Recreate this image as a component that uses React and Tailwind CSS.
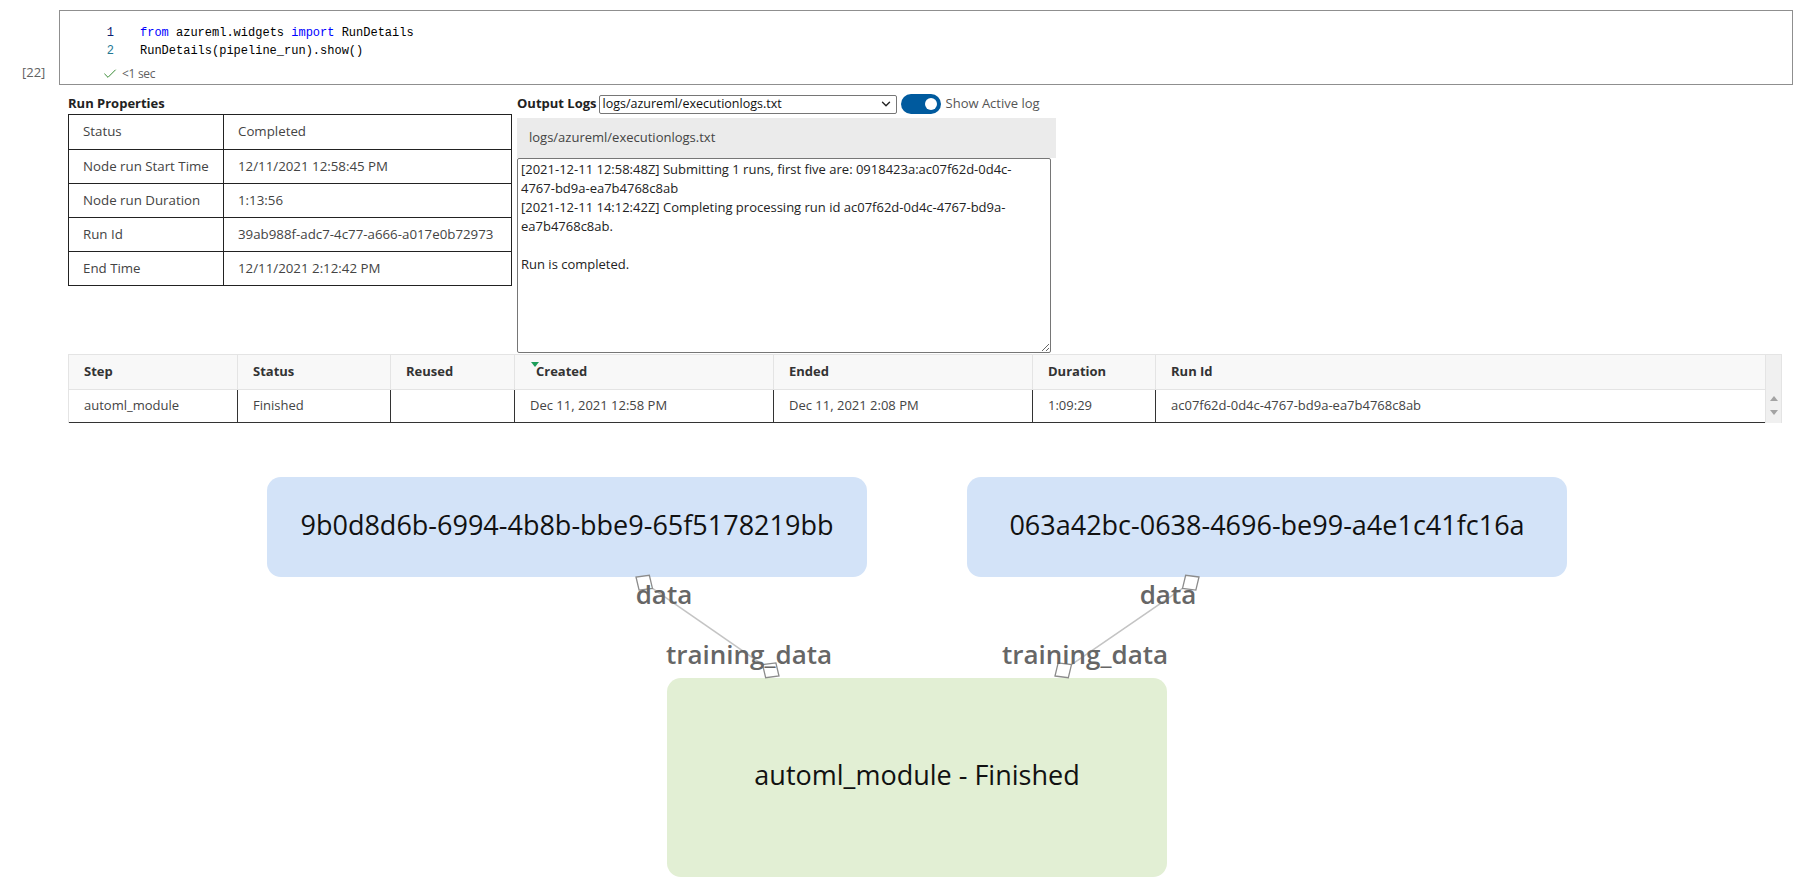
import React from 'react';
import { Check, ChevronDown } from 'lucide-react';

const runProps = [
  ['Status', 'Completed'],
  ['Node run Start Time', '12/11/2021 12:58:45 PM'],
  ['Node run Duration', '1:13:56'],
  ['Run Id', '39ab988f-adc7-4c77-a666-a017e0b72973'],
  ['End Time', '12/11/2021 2:12:42 PM'],
];

const stepCols = [
  { label: 'Step', value: 'automl_module', w: 'w-[169px]' },
  { label: 'Status', value: 'Finished', w: 'w-[153px]' },
  { label: 'Reused', value: '', w: 'w-[124px]' },
  { label: 'Created', value: 'Dec 11, 2021 12:58 PM', w: 'w-[259px]', sorted: true },
  { label: 'Ended', value: 'Dec 11, 2021 2:08 PM', w: 'w-[259px]' },
  { label: 'Duration', value: '1:09:29', w: 'w-[123px]' },
  { label: 'Run Id', value: 'ac07f62d-0d4c-4767-bd9a-ea7b4768c8ab', w: 'w-[609px]', last: true },
];

const logText =
  '[2021-12-11 12:58:48Z] Submitting 1 runs, first five are: 0918423a:ac07f62d-0d4c-\n' +
  '4767-bd9a-ea7b4768c8ab\n' +
  '[2021-12-11 14:12:42Z] Completing processing run id ac07f62d-0d4c-4767-bd9a-\n' +
  'ea7b4768c8ab.\n' +
  '\n' +
  'Run is completed.';

// graph edges, coordinates inside the graph canvas
const edges = [
  { x1: 636, y1: 154, x2: 779, y2: 253 },
  { x1: 1199, y1: 154, x2: 1055, y2: 253 },
];

const diamond = (x, y, ux, uy, len, hw) => {
  const cx = x + (ux * len) / 2;
  const cy = y + (uy * len) / 2;
  const px = -uy;
  const py = ux;
  return [
    [x, y],
    [cx + px * hw, cy + py * hw],
    [x + ux * len, y + uy * len],
    [cx - px * hw, cy - py * hw],
  ]
    .map((p) => p.join(','))
    .join(' ');
};

const Edge = ({ x1, y1, x2, y2 }) => {
  const dx = x2 - x1;
  const dy = y2 - y1;
  const d = Math.sqrt(dx * dx + dy * dy);
  const ux = dx / d;
  const uy = dy / d;
  const len = 20;
  return (
    <g>
      <line
        x1={x1 + ux * len}
        y1={y1 + uy * len}
        x2={x2 - ux * len}
        y2={y2 - uy * len}
        stroke="#c4c4c4"
        strokeWidth="1.6"
      />
      <polygon points={diamond(x1, y1, ux, uy, len, 9)} fill="#fff" stroke="#8c8c8c" strokeWidth="1.3" />
      <polygon points={diamond(x2, y2, -ux, -uy, len, 9)} fill="#fff" stroke="#8c8c8c" strokeWidth="1.3" />
    </g>
  );
};

const Toggle = () => (
  <div className="ml-[4px] w-[40px] h-[20px] rounded-full bg-[#005a9e] flex items-center justify-end pr-[4px]">
    <div className="w-[12px] h-[12px] rounded-full bg-white" />
  </div>
);

const App = () => {
  return (
    <div className="w-[1807px] min-h-[891px] bg-white text-[#333] font-['Open_Sans',sans-serif]">
      {/* notebook cell */}
      <div className="flex pt-[10px] pr-[14px]">
        <div className="w-[59px] shrink-0 flex items-end pl-[22px] pb-[3px] text-[13px] text-[#616161]">[22]</div>
        <div className="flex-1 h-[75px] border border-[#8f8f8f] pt-[13px]">
          <div className="font-['Liberation_Mono',monospace] text-[12px] leading-[18px]">
            <div className="flex">
              <span className="w-[54px] text-right text-[#0b216f]">1</span>
              <span className="ml-[26px] text-[#000]">
                <span className="text-[#0000ff]">from</span> azureml.widgets <span className="text-[#0000ff]">import</span> RunDetails
              </span>
            </div>
            <div className="flex">
              <span className="w-[54px] text-right text-[#237893]">2</span>
              <span className="ml-[26px] text-[#000]">RunDetails(pipeline_run).show()</span>
            </div>
          </div>
          <div className="mt-[6px] h-[16px] flex items-center pl-[42px] text-[12px] text-[#616161]">
            <Check size={16} strokeWidth={1.5} className="text-[#388a34]" />
            <span className="ml-[4px] tracking-[-0.3px]">&lt;1 sec</span>
          </div>
        </div>
      </div>

      {/* run details widget */}
      <div className="pl-[68px] pt-[9px] flex">
        <div className="w-[444px]">
          <div className="h-[20px] flex items-center text-[13px] font-bold text-[#222]">Run Properties</div>
          <div className="border border-[#222] text-[13.3px] text-[#444]">
            {runProps.map(([k, v], i) => (
              <div key={k} className={`flex h-[34px] ${i > 0 ? 'border-t border-[#222]' : ''}`}>
                <div className="w-[155px] border-r border-[#222] pl-[14px] flex items-center">{k}</div>
                <div className="flex-1 pl-[14px] flex items-center">{v}</div>
              </div>
            ))}
          </div>
        </div>

        <div className="ml-[5px]">
          <div className="h-[20px] flex items-center">
            <span className="text-[13px] font-bold text-[#222]">Output Logs</span>
            <div className="ml-[2px] w-[298px] h-[19px] border border-[#767676] rounded-[2px] flex items-center justify-between pl-[3px] pr-[3px] text-[12.5px] text-[#111]">
              <span>logs/azureml/executionlogs.txt</span>
              <ChevronDown size={14} strokeWidth={2.4} className="text-[#222]" />
            </div>
            <Toggle />
            <span className="ml-[5px] text-[13px] text-[#555]">Show Active log</span>
          </div>
          <div className="mt-[4px] w-[539px] h-[40px] bg-[#ebebeb] pl-[12px] flex items-center text-[13px] text-[#444]">
            logs/azureml/executionlogs.txt
          </div>
          <textarea
            readOnly
            defaultValue={logText}
            className="block w-[534px] h-[195px] border border-[#767676] rounded-[2px] px-[3px] py-[1px] text-[13px] leading-[19px] text-[#222] resize overflow-hidden"
          />
        </div>
      </div>

      {/* steps table */}
      <div className="ml-[68px] mt-[1px] w-[1714px] flex border border-b-0 border-[#e4e4e4] text-[13px]">
        <div className="flex flex-col">
          <div className="flex h-[34px] bg-[#f8f8f8]">
            {stepCols.map((c) => (
              <div
                key={c.label}
                className={`${c.w} relative flex items-center font-bold text-[#333] ${c.last ? '' : 'border-r border-[#e4e4e4]'} ${c.sorted ? 'pl-[21px]' : 'pl-[15px]'}`}
              >
                {c.sorted && (
                  <div className="absolute left-[16px] top-[7px] w-0 h-0 border-l-[4px] border-r-[4px] border-t-[5px] border-l-transparent border-r-transparent border-t-[#1e9e5a]" />
                )}
                {c.label}
              </div>
            ))}
          </div>
          <div className="flex h-[34px] border-t border-[#e4e4e4] border-b border-b-[#333]">
            {stepCols.map((c) => (
              <div
                key={c.label}
                className={`${c.w} flex items-center pl-[15px] text-[#444] ${c.last ? '' : 'border-r border-[#333]'}`}
              >
                {c.value}
              </div>
            ))}
          </div>
        </div>
        <div className="w-[18px] bg-[#f0f0f0] border-l border-[#e4e4e4] flex flex-col">
          <div className="h-[35px]" />
          <div className="flex flex-col items-center pt-[6px] gap-[9px]">
            <div className="w-0 h-0 border-l-[4px] border-r-[4px] border-b-[5px] border-l-transparent border-r-transparent border-b-[#a3a3a3]" />
            <div className="w-0 h-0 border-l-[4px] border-r-[4px] border-t-[5px] border-l-transparent border-r-transparent border-t-[#a3a3a3]" />
          </div>
        </div>
      </div>

      {/* pipeline graph */}
      <div className="relative h-[469px]">
        <div className="absolute left-[267px] top-[54px] w-[600px] h-[100px] rounded-[14px] bg-[#d3e3f8] flex items-center justify-center pb-[4px] text-[27px] text-[#111]">
          9b0d8d6b-6994-4b8b-bbe9-65f5178219bb
        </div>
        <div className="absolute left-[967px] top-[54px] w-[600px] h-[100px] rounded-[14px] bg-[#d3e3f8] flex items-center justify-center pb-[4px] text-[27px] text-[#111]">
          063a42bc-0638-4696-be99-a4e1c41fc16a
        </div>
        <div className="absolute left-[667px] top-[255px] w-[500px] h-[199px] rounded-[14px] bg-[#e2efd4] flex items-center justify-center pb-[4px] text-[27px] text-[#111]">
          automl_module - Finished
        </div>

        <svg className="absolute inset-0" width="1807" height="469">
          {edges.map((e, i) => (
            <Edge key={i} {...e} />
          ))}
        </svg>

        <div className="absolute left-[664px] top-[158px] -translate-x-1/2 leading-none text-[26px] font-semibold text-[#666]">data</div>
        <div className="absolute left-[749px] top-[218px] -translate-x-1/2 leading-none text-[26px] font-semibold text-[#666] whitespace-nowrap">training_data</div>
        <div className="absolute left-[1168px] top-[158px] -translate-x-1/2 leading-none text-[26px] font-semibold text-[#666]">data</div>
        <div className="absolute left-[1085px] top-[218px] -translate-x-1/2 leading-none text-[26px] font-semibold text-[#666] whitespace-nowrap">training_data</div>
      </div>
    </div>
  );
};

export default App;
